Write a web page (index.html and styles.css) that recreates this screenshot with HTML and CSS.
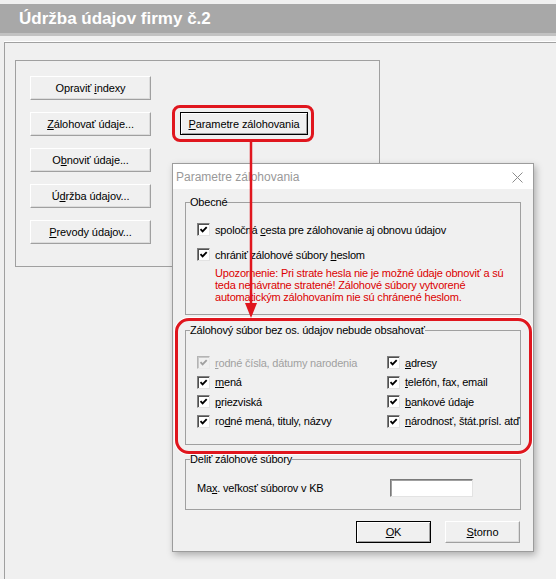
FILE: index.html
```html
<!DOCTYPE html>
<html lang="sk">
<head>
    <meta charset="UTF-8">
    <meta name="viewport" content="width=device-width, initial-scale=1.0">
    <title>Údržba údajov firmy</title>
    <link rel="stylesheet" href="styles.css">
</head>
<body>
    <header class="app-title">Údržba údajov firmy č.2</header>

    <main class="window">
        <div class="group">
            <div class="button-grid">
                <button class="btn">Opraviť <u>i</u>ndexy</button>
                <button class="btn"><u>Z</u>álohovať údaje...</button>
                <div class="marked-btn">
                    <button class="btn btn-default btn-param"><u>P</u>arametre zálohovania</button>
                </div>
                <button class="btn">O<u>b</u>noviť údaje...</button>
                <button class="btn">Ú<u>d</u>ržba údajov...</button>
                <button class="btn"><u>P</u>revody údajov...</button>
            </div>
        </div>
    </main>

    <section class="dialog">
        <div class="dialog-title">
            <span>Parametre zálohovania</span>
            <svg class="close" width="11" height="11" viewBox="0 0 11 11">
                <path d="M0.5 0.5 L10.5 10.5 M10.5 0.5 L0.5 10.5" stroke="#8c8c8c" stroke-width="1" fill="none"/>
            </svg>
        </div>

        <div class="dialog-body">
            <fieldset class="box">
                <legend>Obecné</legend>
                <div class="box-content obecne">
                    <label class="check"><span class="tick"></span><span>spoločná <u>c</u>esta pre zálohovanie aj obnovu údajov</span></label>
                    <label class="check"><span class="tick"></span><span>chrániť zálohové súbory <u>h</u>eslom</span></label>
                    <p class="warning">Upozornenie: Pri strate hesla nie je možné údaje obnoviť a sú teda nenávratne stratené! Zálohové súbory vytvorené automatickým zálohovaním nie sú chránené heslom.</p>
                </div>
            </fieldset>

            <div class="marked-box">
                <fieldset class="box">
                    <legend>Zálohový súbor bez os. údajov nebude obsahovať</legend>
                    <div class="box-content exclude">
                        <label class="check disabled"><span class="tick"></span><span><u>r</u>odné čísla, dátumy narodenia</span></label>
                        <label class="check"><span class="tick"></span><span><u>a</u>dresy</span></label>
                        <label class="check"><span class="tick"></span><span><u>m</u>ená</span></label>
                        <label class="check"><span class="tick"></span><span><u>t</u>elefón, fax, email</span></label>
                        <label class="check"><span class="tick"></span><span><u>p</u>riezviská</span></label>
                        <label class="check"><span class="tick"></span><span><u>b</u>ankové údaje</span></label>
                        <label class="check"><span class="tick"></span><span>ro<u>d</u>né mená, tituly, názvy</span></label>
                        <label class="check"><span class="tick"></span><span><u>n</u>árodnosť, štát.prísl. atď</span></label>
                    </div>
                </fieldset>
            </div>

            <fieldset class="box box-split">
                <legend>Deliť zálohové súbory</legend>
                <div class="box-content split">
                    <label for="max-size">Ma<u>x</u>. veľkosť súborov v KB</label>
                    <input id="max-size" class="field" type="text">
                </div>
            </fieldset>

            <div class="dialog-buttons">
                <button class="btn btn-default btn-small"><u>O</u>K</button>
                <button class="btn btn-small"><u>S</u>torno</button>
            </div>
        </div>
    </section>

    <svg class="arrow" width="14" height="180" viewBox="0 0 14 180">
        <line x1="7" y1="0" x2="7" y2="164" stroke="#e0161e" stroke-width="2.5"/>
        <polygon points="1,162 13,162 7,177" fill="#e0161e"/>
    </svg>
</body>
</html>
```

FILE: styles.css
```css
body {
    margin: 0;
    height: 100vh;
    overflow: hidden;
    background-color: #f0f0f0;
    font-family: "Liberation Sans", Arial, sans-serif;
    font-size: 11px;
    color: #000;
}

u {
    text-decoration-thickness: 1px;
    text-underline-offset: 1px;
}

.app-title {
    margin-top: 4px;
    height: 29px;
    padding-left: 19px;
    background-color: #a8a8a8;
    border-bottom: 3px solid #c2c2c2;
    color: #fff;
    font-size: 17px;
    font-weight: bold;
    line-height: 30px;
}

.window {
    margin: 6px 0 0 4px;
    height: calc(100vh - 42px);
    box-sizing: border-box;
    padding: 17px 0 0 10px;
    border-top: 1px solid #a0a0a0;
    border-left: 1px solid #a0a0a0;
    box-shadow: 0 -1px 0 #fff;
}

.group {
    width: 365px;
    height: 207px;
    box-sizing: border-box;
    padding: 15px 0 0 14px;
    border: 1px solid #a0a0a0;
}

.button-grid {
    display: grid;
    grid-template-columns: 121px auto;
    grid-auto-rows: 24px;
    column-gap: 29px;
    row-gap: 12px;
}

.button-grid > .btn {
    grid-column: 1;
}

/* buttons */
.btn {
    margin: 0;
    padding: 0;
    height: 24px;
    box-sizing: border-box;
    background-color: #f0f0f0;
    border: 1px solid;
    border-color: #fff #a0a0a0 #a0a0a0 #fff;
    box-shadow: inset -1px -1px 0 #dcdcdc;
    font: inherit;
    letter-spacing: -0.1px;
    color: #000;
    text-align: center;
}

.btn-default {
    border: 1px solid #000;
    box-shadow: inset 1px 1px 0 #fff, inset -1px -1px 0 #a0a0a0;
}

.marked-btn {
    grid-column: 2;
    grid-row: 2;
    justify-self: start;
    position: relative;
    height: 23px;
}

.btn-param {
    width: 128px;
    height: 23px;
}

.marked-btn::after,
.marked-box::after {
    content: "";
    position: absolute;
    border: 3px solid #e0161e;
    pointer-events: none;
}

.marked-btn::after {
    inset: -7px -6px -7px -8px;
    border-radius: 8px;
}

/* dialog */
.dialog {
    position: absolute;
    left: 172px;
    top: 163px;
    width: 362px;
    box-sizing: border-box;
    background-color: #f0f0f0;
    border: 1px solid #9c9c9c;
    box-shadow: 2px 3px 7px rgba(0, 0, 0, 0.28);
}

.dialog-title {
    height: 25px;
    padding: 0 10px 0 3px;
    background-color: #fff;
    display: flex;
    align-items: center;
    justify-content: space-between;
    color: #999;
    font-size: 12px;
}

.close {
    margin-top: 1px;
}

.dialog-body {
    padding: 7px 12px 8px 12px;
    display: flex;
    flex-direction: column;
    letter-spacing: -0.2px;
}

.box {
    margin: 0;
    padding: 0;
    border: 1px solid #a0a0a0;
    min-width: 0;
}

.box legend {
    margin-left: 4px;
    padding: 0;
    font-weight: normal;
    line-height: 13px;
}

.marked-box {
    position: relative;
    margin-top: 9px;
}

.marked-box::after {
    inset: -6px -11px -9px -10px;
    border-radius: 14px;
    box-shadow: 0 0 0 1px #fff;
}

.box-content {
    padding-left: 11px;
}

.obecne {
    padding-top: 12px;
    padding-bottom: 11px;
    display: flex;
    flex-direction: column;
    gap: 8px;
}

.warning {
    margin: -4px 0 0 18px;
    line-height: 12px;
    color: #dc0000;
}

.exclude {
    padding-top: 17px;
    padding-bottom: 14px;
    display: grid;
    grid-template-columns: 190px auto;
    grid-auto-rows: 17px;
    row-gap: 2.5px;
}

.box-split {
    margin-top: 8.5px;
}

.split {
    padding-top: 12.5px;
    padding-bottom: 12px;
    display: flex;
    align-items: center;
}

.split label {
    width: 193px;
}

.field {
    margin: 0;
    width: 83px;
    height: 18px;
    box-sizing: border-box;
    background-color: #fff;
    border: 1px solid;
    border-color: #7a7a7a #e3e3e3 #e3e3e3 #7a7a7a;
    box-shadow: inset 1px 1px 0 #a0a0a0;
    font: inherit;
}

/* checkboxes */
.check {
    display: flex;
    align-items: center;
    gap: 5px;
    height: 17px;
    white-space: nowrap;
}

.tick {
    flex: none;
    width: 13px;
    height: 13px;
    box-sizing: border-box;
    border: 1px solid;
    border-color: #808080 #e3e3e3 #e3e3e3 #808080;
    box-shadow: inset 1px 1px 0 #505050;
    background: #fff url("data:image/svg+xml,%3Csvg xmlns='http://www.w3.org/2000/svg' width='11' height='11'%3E%3Cpath d='M2.5 5.2 L4.6 7.3 L8.7 3.2' stroke='%23000' stroke-width='1.9' fill='none'/%3E%3C/svg%3E") no-repeat 0 0;
}

.check.disabled {
    color: #a0a0a0;
}

.check.disabled .tick {
    border-color: #b4b4b4 #eaeaea #eaeaea #b4b4b4;
    box-shadow: inset 1px 1px 0 #c8c8c8;
    background: #f0f0f0 url("data:image/svg+xml,%3Csvg xmlns='http://www.w3.org/2000/svg' width='11' height='11'%3E%3Cpath d='M2.5 5.2 L4.6 7.3 L8.7 3.2' stroke='%23a0a0a0' stroke-width='1.9' fill='none'/%3E%3C/svg%3E") no-repeat 0 0;
}

.dialog-buttons {
    margin-top: 11px;
    margin-right: 1px;
    display: flex;
    justify-content: flex-end;
    gap: 14px;
}

.btn-small {
    width: 75px;
    height: 22px;
}

.arrow {
    position: absolute;
    left: 244px;
    top: 141px;
}
```
